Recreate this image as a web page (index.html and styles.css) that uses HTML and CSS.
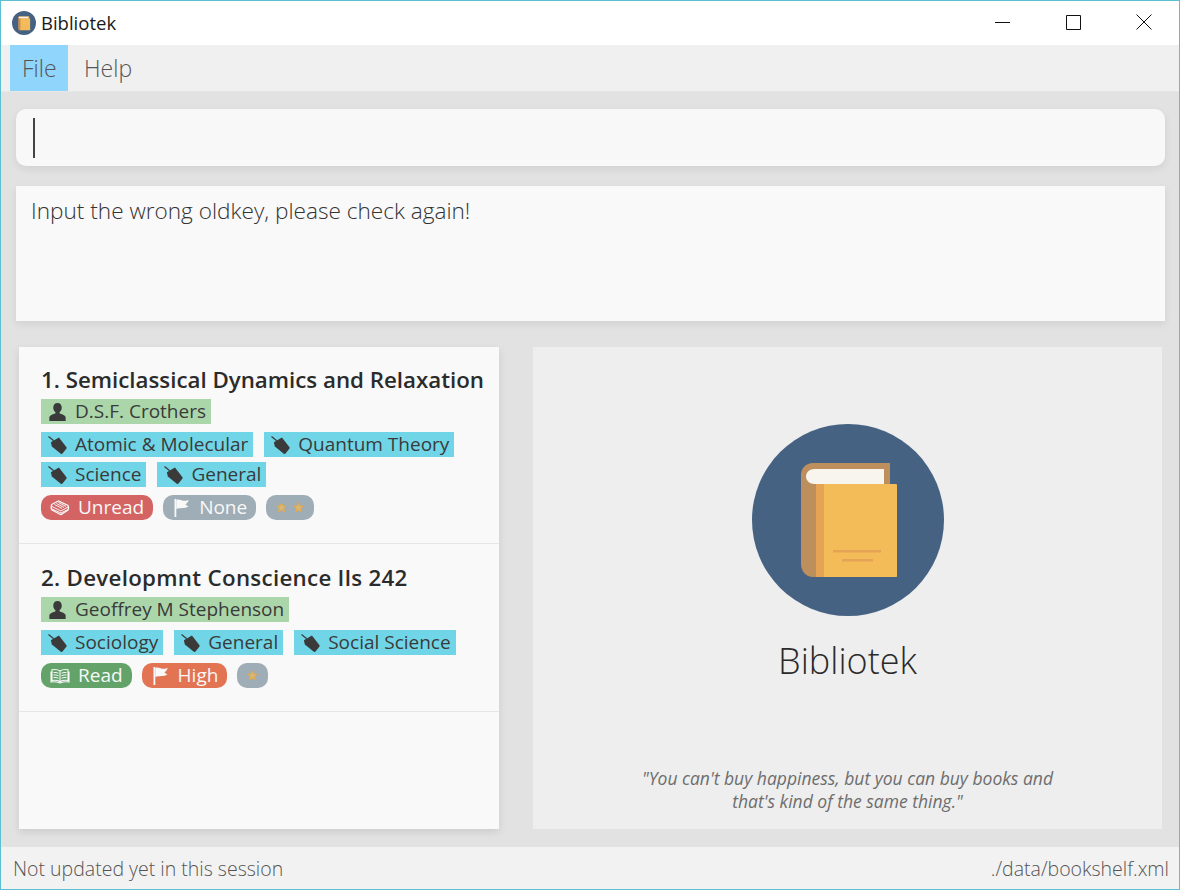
FILE: index.html
```html
<!DOCTYPE html>
<html lang="en">

<head>
    <meta charset="UTF-8">
    <title>Bibliotek</title>
    <link rel="stylesheet" href="styles.css">
</head>

<body>
    <svg class="defs" width="0" height="0">
        <symbol id="person" viewBox="0 0 17 17">
            <path d="M8.5 0c-2.6 0-4 1.800-4 4.200 0 1.800 0.700 3.400 2 4.400v1.400c-2 0.700-5.100 1.500-5.700 3.200v3.800h15.400v-3.800c-0.600-1.700-3.700-2.500-5.700-3.200v-1.400c1.300-1 2-2.600 2-4.400 0-2.400-1.400-4.200-4-4.200z" />
        </symbol>
        <symbol id="tag" viewBox="0 0 19 19">
            <path d="M0 0.500l5.500 4.500" fill="none" stroke="#3a3a3a" stroke-width="1.300" />
            <path d="M2.500 6.500l8.500-5 8 10.500q0.300 0.800-0.200 1.500l-4 5q-0.800 0.800-1.800 0.200l-9.500-7.700z" />
        </symbol>
        <symbol id="book-closed" viewBox="0 0 20 16">
            <path d="M1.500 6q-0.500-1.500 1-2l6-3 9.500 4.500q1 2.500 0 4.500l-6 4q-1 1-2.500 0l-7.500-4q-1.500-2-0.500-4z" fill="none" stroke="currentColor" stroke-width="1.300" />
            <path d="M2 6.500l9 4.500 7-4M2 9l9 4 7-3.500M4.500 4.500l7.500 4M6.500 3.500l7.500 4M8.500 2.500l7.500 4" fill="none" stroke="currentColor" stroke-width="1" />
        </symbol>
        <symbol id="book-open" viewBox="0 0 20 16">
            <path d="M10 3c-2-1.500-5-1.800-8-1.300v10.800c3-0.400 6-0.200 8 1.200 2-1.400 5-1.600 8-1.200v-10.800c-3-0.500-6-0.200-8 1.300zM10 3v11M1 3.500v10.500c3-0.400 6-0.300 9 1 3-1.300 6-1.400 9-1v-10.500" fill="none" stroke="currentColor" stroke-width="1.100" />
            <path d="M3.500 4.500c1.500-0.200 3.500 0 5 0.700M3.500 7c1.500-0.200 3.500 0 5 0.700M3.500 9.500c1.500-0.200 3.500 0 5 0.700M16.500 4.500c-1.500-0.200-3.500 0-5 0.700M16.500 7c-1.500-0.200-3.500 0-5 0.700M16.500 9.500c-1.500-0.200-3.500 0-5 0.700" fill="none" stroke="currentColor" stroke-width="1" />
        </symbol>
        <symbol id="flag" viewBox="0 0 16 18">
            <path d="M1 0h1.800v18h-1.800z" />
            <path d="M2.800 1c2.700-1.200 5 0.800 7.200 0.800 1.700 0 3.700-0.400 5.200-0.900-0.600 1.600-1.700 3.200-3.300 4.700 0.900 0.800 1.900 1.400 3 1.800-4 2.300-7.800 1-12.100 2.600z" />
        </symbol>
        <symbol id="star" viewBox="0 0 12 12">
            <path d="M6 1l1.500 3.300 3.500 0.400-2.600 2.400 0.700 3.500-3.100-1.800-3.100 1.800 0.700-3.500-2.600-2.400 3.500-0.400z" fill="#d8b777" stroke="#eba63f" stroke-width="1" />
        </symbol>
        <symbol id="logo" viewBox="0 0 192 192">
            <circle cx="96" cy="96" r="96" fill="#456283" />
            <path d="M61 39h77v30h-74v84h-3c-7 0-12-6-12-13v-89c0-7 5-12 12-12z" fill="#bc8f5c" />
            <path d="M62 45h70v15h-70c-4 0-8-3-8-7.500s4-7.500 8-7.500z" fill="#f8f5ee" />
            <path d="M64 60h80c1 0 1 1 1 1v91c0 1-1 1-1 1h-80z" fill="#f4bc58" />
            <path d="M64 60h8v93h-8z" fill="#e5a355" />
            <path d="M81 126h48v2.500h-48zM90 135h31v2.500h-31z" fill="#e5a355" />
        </symbol>
    </svg>

    <div class="window">
        <header class="titlebar">
            <svg class="title-icon"><use href="#logo" /></svg>
            <span class="title-text">Bibliotek</span>
            <div class="win-buttons">
                <svg class="win-btn" width="16" height="16" viewBox="0 0 16 16"><path d="M1 8.500h15" stroke="#111" fill="none" /></svg>
                <svg class="win-btn" width="16" height="16" viewBox="0 0 16 16"><path d="M1.500 1.500h14v14h-14z" stroke="#111" fill="none" /></svg>
                <svg class="win-btn" width="16" height="16" viewBox="0 0 16 16"><path d="M0.500 0.500l15 15M15.500 0.500l-15 15" stroke="#111" fill="none" /></svg>
            </div>
        </header>

        <nav class="menubar">
            <a class="menu-item active">File</a>
            <a class="menu-item">Help</a>
        </nav>

        <main class="content">
            <div class="command-box"><span class="caret"></span></div>
            <div class="result-box">Input the wrong oldkey, please check again!</div>

            <div class="split">
                <section class="book-list">
                    <article class="book-card">
                        <h2 class="book-title">1. Semiclassical Dynamics and Relaxation</h2>
                        <div class="row">
                            <span class="chip author"><svg class="ico"><use href="#person" /></svg>D.S.F. Crothers</span>
                        </div>
                        <div class="row tags">
                            <span class="chip tag"><svg class="ico"><use href="#tag" /></svg>Atomic &amp; Molecular</span>
                            <span class="chip tag"><svg class="ico"><use href="#tag" /></svg>Quantum Theory</span>
                            <span class="chip tag"><svg class="ico"><use href="#tag" /></svg>Science</span>
                            <span class="chip tag"><svg class="ico"><use href="#tag" /></svg>General</span>
                        </div>
                        <div class="row pills">
                            <span class="pill unread"><svg class="ico wide"><use href="#book-closed" /></svg>Unread</span>
                            <span class="pill grey"><svg class="ico"><use href="#flag" /></svg>None</span>
                            <span class="pill grey stars"><svg class="star"><use href="#star" /></svg><svg class="star"><use href="#star" /></svg></span>
                        </div>
                    </article>
                    <article class="book-card">
                        <h2 class="book-title">2. Developmnt Conscience Ils 242</h2>
                        <div class="row">
                            <span class="chip author"><svg class="ico"><use href="#person" /></svg>Geoffrey M Stephenson</span>
                        </div>
                        <div class="row tags">
                            <span class="chip tag"><svg class="ico"><use href="#tag" /></svg>Sociology</span>
                            <span class="chip tag"><svg class="ico"><use href="#tag" /></svg>General</span>
                            <span class="chip tag"><svg class="ico"><use href="#tag" /></svg>Social Science</span>
                        </div>
                        <div class="row pills">
                            <span class="pill read"><svg class="ico wide"><use href="#book-open" /></svg>Read</span>
                            <span class="pill high"><svg class="ico"><use href="#flag" /></svg>High</span>
                            <span class="pill grey stars"><svg class="star"><use href="#star" /></svg></span>
                        </div>
                    </article>
                </section>

                <section class="welcome">
                    <svg class="logo"><use href="#logo" /></svg>
                    <div class="app-name">Bibliotek</div>
                    <p class="quote">"You can't buy happiness, but you can buy books and<br>that's kind of the same thing."</p>
                </section>
            </div>
        </main>

        <footer class="statusbar">
            <span>Not updated yet in this session</span>
            <span>./data/bookshelf.xml</span>
        </footer>
    </div>
</body>

</html>
```

FILE: styles.css
```css
html,
body {
    margin: 0;
    padding: 0;
}

body {
    font-family: "Open Sans", "Liberation Sans", sans-serif;
    color: #333;
}

.defs {
    position: absolute;
}

.window {
    box-sizing: border-box;
    width: 1180px;
    height: 890px;
    border: 1px solid #5cc0d2;
    display: flex;
    flex-direction: column;
    background: #e2e2e2;
}

/* title bar */
.titlebar {
    height: 44px;
    flex: none;
    background: #fff;
    display: flex;
    align-items: center;
    padding-left: 11px;
}

.title-icon {
    width: 24px;
    height: 24px;
}

.title-text {
    margin-left: 5px;
    margin-bottom: 2px;
    font-size: 18.5px;
    color: #1a1a1a;
}

.win-buttons {
    margin-left: auto;
    margin-right: 27px;
    margin-bottom: 2px;
    display: flex;
    gap: 55px;
}

/* menu */
.menubar {
    height: 47px;
    flex: none;
    box-sizing: border-box;
    background: #f0f0f0;
    border-bottom: 1px solid #e6e6e6;
    padding-left: 9px;
    display: flex;
}

.menu-item {
    padding: 0 15px 0 12px;
    font-size: 23px;
    font-weight: 300;
    line-height: 46px;
    color: #555;
}

.menu-item.active {
    width: 58px;
    box-sizing: border-box;
    background: #90d5fb;
}

.menu-item.active + .menu-item {
    padding-left: 16px;
}

/* main area */
.content {
    flex: 1;
    min-height: 0;
    padding: 17px 14px 18px 15px;
    display: flex;
    flex-direction: column;
}

.command-box {
    height: 57px;
    flex: none;
    background: #f8f8f8;
    border-radius: 10px;
    box-shadow: 0 3px 8px rgba(0, 0, 0, 0.08);
    display: flex;
    align-items: center;
    padding-left: 17px;
}

.caret {
    width: 2px;
    height: 40px;
    background: #444;
}

.result-box {
    height: 135px;
    flex: none;
    box-sizing: border-box;
    margin-top: 20px;
    padding: 9px 15px;
    background: #f9f9f9;
    box-shadow: 0 3px 8px rgba(0, 0, 0, 0.08);
    font-size: 22.6px;
    font-weight: 300;
    line-height: 32px;
    color: #333;
}

.split {
    flex: 1;
    min-height: 0;
    margin-top: 26px;
    padding: 0 3px;
    display: flex;
    gap: 34px;
}

/* book list */
.book-list {
    width: 480px;
    flex: none;
    background: #f9f9f9;
    box-shadow: 0 3px 8px rgba(0, 0, 0, 0.1);
}

.book-card {
    padding: 16px 0 10px 22px;
    border-bottom: 1px solid #e6e6e6;
    box-sizing: border-box;
}

.book-card:first-child {
    height: 197px;
}

.book-card:nth-child(2) {
    height: 168px;
    padding-top: 17px;
}

.book-title {
    margin: 0;
    font-size: 22.3px;
    font-weight: 600;
    line-height: 33px;
    color: #2b2b2b;
    white-space: nowrap;
}

.book-card:nth-child(2) .book-title {
    letter-spacing: 0.3px;
}

.row {
    display: flex;
    flex-wrap: wrap;
    margin-top: 3px;
}

.row.tags {
    margin-top: 8px;
    gap: 5px 11px;
    width: 440px;
}

.row.pills {
    margin-top: 8px;
    gap: 10px;
}

.chip,
.pill {
    height: 25px;
    box-sizing: border-box;
    display: inline-flex;
    align-items: center;
    font-size: 19px;
    line-height: 25px;
    white-space: nowrap;
}

.chip {
    padding: 0 5px 0 7px;
    color: #3a3a3a;
}

.author {
    background: #abd6aa;
}

.tag {
    background: #70d6e7;
}

.pill {
    border-radius: 10px;
    padding: 0 9px;
    color: #f8f8f8;
}

.unread {
    background: #d46364;
}

.read {
    background: #63a36a;
}

.high {
    background: #e37453;
}

.grey {
    background: #9fadb6;
}

.stars {
    gap: 6px;
    padding: 0 10px;
}

.ico {
    width: 19px;
    height: 18px;
    margin-right: 8px;
    fill: #3a3a3a;
    flex: none;
}

.ico.wide {
    width: 20px;
    height: 16px;
    margin-right: 8px;
}

.pill .ico {
    fill: #f8f8f8;
    color: #f8f8f8;
}

.star {
    width: 11px;
    height: 11px;
    flex: none;
}

/* right side panel */
.welcome {
    flex: 1;
    background: #eee;
    display: flex;
    flex-direction: column;
    align-items: center;
    padding-top: 77px;
}

.logo {
    width: 192px;
    height: 192px;
    flex: none;
}

.app-name {
    margin-top: 17px;
    font-size: 36px;
    font-weight: 300;
    line-height: 56px;
    color: #2a2a2a;
}

.quote {
    margin: auto 0 0;
    padding-bottom: 16px;
    font-size: 17.5px;
    font-style: italic;
    line-height: 23px;
    text-align: center;
    color: #6d6d6d;
}

/* status bar */
.statusbar {
    height: 42px;
    flex: none;
    background: #f2f2f2;
    display: flex;
    justify-content: space-between;
    align-items: center;
    padding: 0 10px 0 12px;
    font-size: 19.5px;
    font-weight: 300;
    color: #555;
}
```
